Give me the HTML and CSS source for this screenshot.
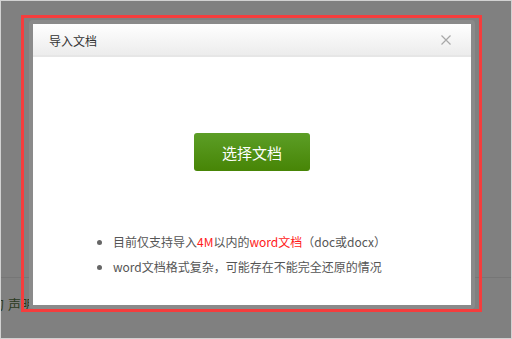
FILE: index.html
```html
<!DOCTYPE html>
<html lang="zh-CN">
<head>
<meta charset="utf-8">
<title>导入文档</title>
<link rel="stylesheet" href="styles.css">
</head>
<body>
<div class="page">
  <div class="bg-content">
    <div class="bg-rule"></div>
    <div class="bg-text"><span class="cut">的</span>声明</div>
  </div>

  <div class="dialog">
    <div class="dialog-inner">
      <div class="dialog-head">
        <span class="dialog-title">导入文档</span>
        <svg class="close" width="10" height="10" viewBox="0 0 10 10">
          <path d="M0.5 0.5 L9.5 9.5 M9.5 0.5 L0.5 9.5" stroke="#a8a8a8" stroke-width="1.2" fill="none"/>
        </svg>
      </div>
      <div class="dialog-body">
        <button class="choose-btn">选择文档</button>
        <ul class="tips">
          <li>目前仅支持导入<span class="hl">4M</span>以内的<span class="hl">word文档</span>（doc或docx）</li>
          <li>word文档格式复杂，可能存在不能完全还原的情况</li>
        </ul>
      </div>
    </div>
  </div>

  <div class="highlight-box"></div>
</div>
</body>
</html>
```

FILE: styles.css
```css
html, body {
  margin: 0;
  padding: 0;
  background: #808080;
}

.page {
  position: relative;
  width: 512px;
  height: 339px;
  box-sizing: border-box;
  border: 1px solid #d2d2d2;
  background: #808080;
  overflow: hidden;
  font-family: "Noto Sans CJK SC", "Noto Sans", sans-serif;
}

.bg-content {
  padding-top: 276px;
}

.bg-rule {
  height: 1px;
  background: #767676;
}

.bg-text {
  margin-top: 17px;
  margin-left: -10px;
  font-size: 13px;
  line-height: 18px;
  color: #2b3a1e;
  white-space: nowrap;
}

.bg-text .cut {
  margin-right: 4px;
}

.dialog {
  position: absolute;
  left: 28px;
  top: 19px;
  width: 446px;
  height: 289px;
  box-sizing: border-box;
  padding: 4px;
  background: #8a8a8a;
  border-radius: 4px;
}

.dialog-inner {
  height: 100%;
  background: #fff;
  display: flex;
  flex-direction: column;
}

.dialog-head {
  height: 31px;
  border-bottom: 2px solid #e6e6e6;
  background: linear-gradient(#ffffff, #ececec);
  display: flex;
  align-items: center;
  justify-content: space-between;
  padding: 0 20px 0 16px;
}

.dialog-title {
  font-size: 12px;
  color: #333;
  line-height: 31px;
  margin-top: 1px;
}

.close {
  display: block;
  margin-top: 1px;
}

.dialog-body {
  flex: 1;
  padding-top: 76px;
}

.choose-btn {
  display: block;
  margin: 0 auto;
  width: 116px;
  height: 38px;
  border: none;
  border-radius: 3px;
  background: linear-gradient(#5c9e26, #478506);
  color: #fff;
  font-family: "Noto Sans CJK SC", "Noto Sans", sans-serif;
  font-size: 15px;
  padding: 0;
}

.tips {
  margin: 58px 0 0 0;
  padding-left: 80px;
  font-size: 12px;
  line-height: 25px;
  color: #555;
  list-style: disc;
}

.tips li::marker {
  color: #666;
}

.hl {
  color: #ff1a1a;
}

.highlight-box {
  position: absolute;
  left: 20px;
  top: 14px;
  width: 461px;
  height: 297px;
  box-sizing: border-box;
  border: 3px solid #f53d3d;
}
```
